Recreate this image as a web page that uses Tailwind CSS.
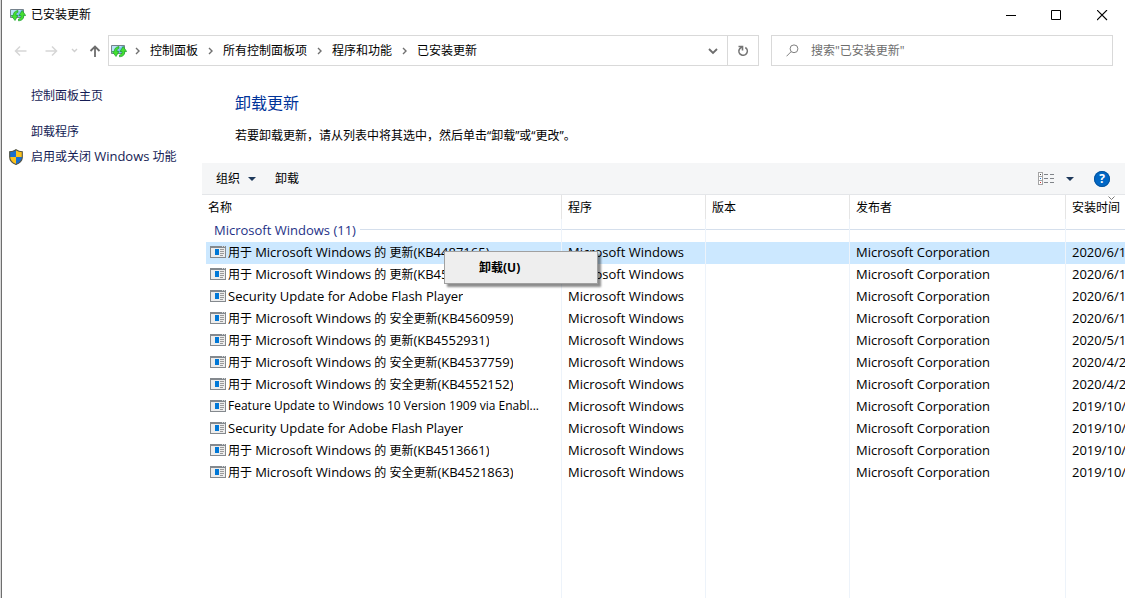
<!DOCTYPE html>
<html lang="zh-CN">
<head>
<meta charset="utf-8">
<title>已安装更新</title>
<script src="https://cdn.jsdelivr.net/npm/@tailwindcss/browser@4"></script>
</head>
<body class="flex h-screen overflow-hidden border-l border-[#d8d8d8] bg-white font-['Open_Sans','Noto_Sans_CJK_SC',sans-serif] text-xs text-black">
<svg class="hidden">
  <symbol id="updates" viewBox="0 0 16 14">
    <path d="M.5 1.500h13v8h-13z" fill="#7cc0ea" stroke="#76828c"/>
    <path d="M1 2h10L3 9H1z" fill="#b9e2f8"/>
    <path d="M8 2.500C4.500 3 3.200 5 3.300 7.500H1.200L5 12.500l3-5H6C6 5.500 6.500 4.500 8 4.200z" fill="#45e032" stroke="#1a9e2c" stroke-width=".7"/>
    <path d="M8.500 12.800c4-.3 5.300-2.300 5.200-5.300h2L12.200 2.500 9 7.500h2c.2 2-.5 3.200-2.500 3.500z" fill="#45e032" stroke="#1a9e2c" stroke-width=".7"/>
  </symbol>
  <symbol id="program" viewBox="0 0 16 12" shape-rendering="crispEdges">
    <path d="M0 0h16v12H0z" fill="#84898e"/>
    <path d="M1 2h14v9H1z" fill="#ececec"/>
    <path d="M12 0h1v1h-1zM14 0h1v1h-1z" fill="#d5d8da"/>
    <path d="M5 3h4v6H5z" fill="#0078d7"/>
    <path d="M10 3h4v1h-4zM10 5h4v1h-4zM10 7h4v1h-4zM10 9h3v1h-3z" fill="#9a9a9a"/>
  </symbol>
  <symbol id="crumb" viewBox="0 0 5 8"><path d="M1 1l3 3-3 3" fill="none" stroke="#707070" stroke-width="1.400"/></symbol>
</svg>
<div class="flex min-w-0 flex-1 flex-col border-l border-[#6e6e6e]">
  <header class="flex h-[30px] items-center pl-2">
    <svg class="h-[14px] w-4"><use href="#updates"/></svg>
    <h1 class="ml-[5px] flex-1">已安装更新</h1>
    <button aria-label="最小化" class="flex h-[28px] w-[46px] items-center justify-center"><svg class="h-[11px] w-[11px]" viewBox="0 0 11 11"><path d="M0 5.500h10" stroke="#000"/></svg></button>
    <button aria-label="最大化" class="flex h-[28px] w-[45px] items-center justify-center"><svg class="h-[11px] w-[11px]" viewBox="0 0 11 11"><path d="M.5.5h9v9h-9z" fill="none" stroke="#000"/></svg></button>
    <button aria-label="关闭" class="flex h-[28px] w-[46px] items-center justify-center"><svg class="h-[11px] w-[11px]" viewBox="0 0 11 11"><path d="M0 0l10 10M10 0L0 10" stroke="#000" stroke-width="1.100"/></svg></button>
  </header>
  <nav class="flex h-[41px] items-center pr-3 pl-3" aria-label="导航">
    <button aria-label="后退" class="h-3 w-[13px]"><svg class="h-3 w-[13px]" viewBox="0 0 13 12" fill="none" stroke="#d6d6d6" stroke-width="1.500"><path d="M12.500 6H1.500M6 1.500L1.500 6 6 10.500"/></svg></button>
    <button aria-label="前进" class="ml-[18px] h-3 w-[13px]"><svg class="h-3 w-[13px]" viewBox="0 0 13 12" fill="none" stroke="#d6d6d6" stroke-width="1.500"><path d="M.5 6h11M7 1.500L11.500 6 7 10.500"/></svg></button>
    <button aria-label="最近位置" class="ml-[13px] h-2 w-[7px]"><svg class="h-2 w-[7px]" viewBox="0 0 7 8" fill="none" stroke="#cfcfcf" stroke-width="1.400"><path d="M1 2l2.500 2.500L6 2"/></svg></button>
    <button aria-label="上移" class="ml-[11px] h-3 w-3"><svg class="h-3 w-3" viewBox="0 0 12 12" fill="none" stroke="#6d6d6d" stroke-width="1.800"><path d="M6 12V1.500M1.500 6L6 1.500 10.500 6"/></svg></button>
    <div class="ml-[7px] flex h-[31px] min-w-0 flex-1 items-center border border-[#d9d9d9] pl-[2px]">
      <svg class="h-[14px] w-4"><use href="#updates"/></svg>
      <svg class="mx-2 h-2 w-[5px]"><use href="#crumb"/></svg>
      <a href="#" class="ml-[2px]">控制面板</a>
      <svg class="mx-[10px] h-2 w-[5px]"><use href="#crumb"/></svg>
      <a href="#">所有控制面板项</a>
      <svg class="mx-[10px] h-2 w-[5px]"><use href="#crumb"/></svg>
      <a href="#">程序和功能</a>
      <svg class="mx-[10px] h-2 w-[5px]"><use href="#crumb"/></svg>
      <a href="#">已安装更新</a>
      <button aria-label="以前的位置" class="ml-auto flex h-full w-[29px] items-center justify-center"><svg class="h-2 w-[10px]" viewBox="0 0 10 8" fill="none" stroke="#6d6d6d" stroke-width="1.800"><path d="M1 2l4 4 4-4"/></svg></button>
      <button aria-label="刷新" class="flex h-full w-[31px] items-center justify-center border-l border-[#d9d9d9]"><svg class="h-3 w-3" viewBox="0 0 12 12" fill="none" stroke="#757575" stroke-width="1.600"><path d="M8.300 2.500a4.200 4.200 0 1 1-6 1.800Q3 3 5 2"/><path d="M1.500 1.500h4v4"/></svg></button>
    </div>
    <label class="ml-3 flex h-[31px] w-[342px] items-center border border-[#d9d9d9] pl-[14px]">
      <svg class="h-[13px] w-[13px]" viewBox="0 0 13 13" fill="none" stroke="#808080"><circle cx="8" cy="4.800" r="3.900"/><path d="M5.200 7.600L.5 12.300"/></svg>
      <input type="search" aria-label="搜索" placeholder='搜索"已安装更新"' class="ml-3 min-w-0 flex-1 outline-none placeholder:text-[#6d6d6d]">
    </label>
  </nav>
  <div class="flex min-h-0 flex-1">
    <aside class="flex w-[200px] shrink-0 flex-col pt-[15px] pl-[7px] text-[#151c55]">
      <a href="#" class="ml-[22px] leading-5">控制面板主页</a>
      <a href="#" class="mt-4 ml-[22px] leading-5">卸载程序</a>
      <a href="#" class="mt-1 flex items-center leading-5">
        <svg class="mr-2 h-4 w-[14px]" viewBox="0 0 14 16"><path d="M7 .5C5 2 3 2.500.6 2.500V8C.6 12 4 14.500 7 15.600 10 14.500 13.400 12 13.400 8V2.500C11 2.500 9 2 7 .5z" fill="#fcc21b"/><path d="M7 .5C5 2 3 2.500.6 2.500V8H7zM7 8v7.600C10 14.500 13.400 12 13.400 8z" fill="#1a6fd0"/><path d="M7 .7C5 2.200 3 2.700.7 2.700V8C.7 12 4 14.300 7 15.400 10 14.300 13.300 12 13.300 8V2.700C11 2.700 9 2.200 7 .7z" fill="none" stroke="#54564c" stroke-width="1.100"/></svg>
        <span>启用或关闭 <span class="text-[13px]">Windows</span> 功能</span></a>
    </aside>
    <main class="flex min-w-0 flex-1 flex-col">
      <h2 class="mt-5 ml-[33px] text-base leading-6 text-[#003399]">卸载更新</h2>
      <p class="mt-[11px] ml-[33px] leading-5">若要卸载更新，请从列表中将其选中，然后单击“卸载”或“更改”。</p>
      <div class="mt-[17px] flex h-8 shrink-0 items-center border-b border-[#e4e6e9] bg-[#f5f6f7] pr-[15px] pl-[14px]">
        <button class="flex items-center">组织<svg class="ml-2 h-1 w-2" viewBox="0 0 8 4"><path d="M0 0h8L4 4z" fill="#1e395b"/></svg></button>
        <button class="ml-[19px]">卸载</button>
        <button aria-label="更改视图" class="ml-auto flex items-center">
          <svg class="h-[13px] w-4" viewBox="0 0 16 13" shape-rendering="crispEdges"><path d="M.5.500h4v12h-4zM.5 4.500h4M.5 8.500h4" fill="#fff" stroke="#a5a5a5"/><path d="M2 2h1v1H2z" fill="#444"/><path d="M2 6h1v1H2z" fill="#2878d0"/><path d="M2 10h1v1H2z" fill="#d03030"/><path d="M6 2.500h4M12 2.500h4M6 6.500h4M12 6.500h4M6 10.500h4M12 10.500h4" stroke="#808489"/></svg>
          <svg class="ml-3 h-1 w-2" viewBox="0 0 8 4"><path d="M0 0h8L4 4z" fill="#1e395b"/></svg>
        </button>
        <button aria-label="帮助" class="ml-5 flex h-4 w-4 items-center justify-center rounded-full bg-[#0067c5] text-xs font-bold text-white outline outline-[#07539b] -outline-offset-1">?</button>
      </div>
      <div class="relative ml-1 min-h-0 flex-1">
        <table class="h-full w-full table-fixed border-separate border-spacing-0 text-left whitespace-nowrap">
          <colgroup><col class="w-[356px]"><col class="w-[144px]"><col class="w-[144px]"><col class="w-[216px]"><col></colgroup>
          <thead>
            <tr class="h-6 *:border-r *:border-[#e5e5e5] *:p-0 *:pt-px *:font-normal">
              <th class="pl-[2px]!">名称</th><th class="pl-[6px]!">程序</th><th class="pl-[6px]!">版本</th><th class="pl-[6px]!">发布者</th>
              <th class="relative border-r-0! pl-[6px]!">安装时间<svg class="absolute top-px left-[42px] h-1 w-[7px]" viewBox="0 0 7 4"><path d="M.5.5l3 3 3-3" fill="none" stroke="#7a7a7a"/></svg></th>
            </tr>
          </thead>
          <tbody id="rows">
            <tr class="h-[23px] *:border-r *:border-[#edf3fa] *:p-0 *:pb-[2px]">
              <td><div class="flex items-center pl-2 text-[13px] leading-4 text-[#1e3287]">Microsoft Windows (11)<span class="ml-1 h-px flex-1 bg-[#d5dfec]"></span></div></td>
              <td><div class="h-px bg-[#d5dfec]"></div></td><td><div class="h-px bg-[#d5dfec]"></div></td><td><div class="h-px bg-[#d5dfec]"></div></td><td class="border-r-0!"><div class="h-px bg-[#d5dfec]"></div></td>
            </tr>
          </tbody>
        </table>
        <div role="menu" class="absolute top-[56px] left-[238px] h-[33px] w-[154px] border border-[#a0a0a0] bg-[#eeeeee] shadow-[3px_3px_2px_rgba(0,0,0,0.45)]">
          <button role="menuitem" class="h-full w-full pl-[34px] text-left font-bold">卸载(U)</button>
        </div>
      </div>
    </main>
  </div>
</div>
<script>
const updates = [
  ['用于 Microsoft Windows 的 更新(KB4487165)', '2020/6/12'],
  ['用于 Microsoft Windows 的 更新(KB4561600)', '2020/6/11'],
  ['Security Update for Adobe Flash Player', '2020/6/11'],
  ['用于 Microsoft Windows 的 安全更新(KB4560959)', '2020/6/10'],
  ['用于 Microsoft Windows 的 更新(KB4552931)', '2020/5/13'],
  ['用于 Microsoft Windows 的 安全更新(KB4537759)', '2020/4/23'],
  ['用于 Microsoft Windows 的 安全更新(KB4552152)', '2020/4/23'],
  ['Feature Update to Windows 10 Version 1909 via Enabl...', '2019/10/7'],
  ['Security Update for Adobe Flash Player', '2019/10/7'],
  ['用于 Microsoft Windows 的 更新(KB4513661)', '2019/10/7'],
  ['用于 Microsoft Windows 的 安全更新(KB4521863)', '2019/10/7'],
];
const cell = 'border-r border-[#edf3fa] p-0 pb-[2px] pl-[6px] align-middle';
// Long names stay at the base size so that they fit in the column.
const mixed = s => s.length > 50 ? s : s.replace(/[\x21-\x7e]+( [\x21-\x7e]+)*/g, '<span class="text-[13px]">$&</span>');
document.getElementById('rows').insertAdjacentHTML('beforeend', updates.map(([name, date], i) => `
  <tr class="h-[22px] text-[13px] leading-4 ${i === 0 ? 'bg-[#cce8ff]' : ''}">
    <td class="border-r border-[#edf3fa] p-0 pr-[6px] pb-[2px] pl-1 align-middle"><div class="flex items-center"><svg class="mr-[2px] h-3 w-4 shrink-0"><use href="#program"/></svg><span class="truncate text-xs leading-[18px]">${mixed(name)}</span></div></td>
    <td class="${cell}">Microsoft Windows</td><td class="${cell}"></td><td class="${cell}">Microsoft Corporation</td><td class="overflow-hidden p-0 pb-[2px] pl-[6px] align-middle">${date}</td>
  </tr>`).join('') + `<tr><td class="${cell}"></td><td class="${cell}"></td><td class="${cell}"></td><td class="${cell}"></td><td></td></tr>`);
</script>
</body>
</html>
